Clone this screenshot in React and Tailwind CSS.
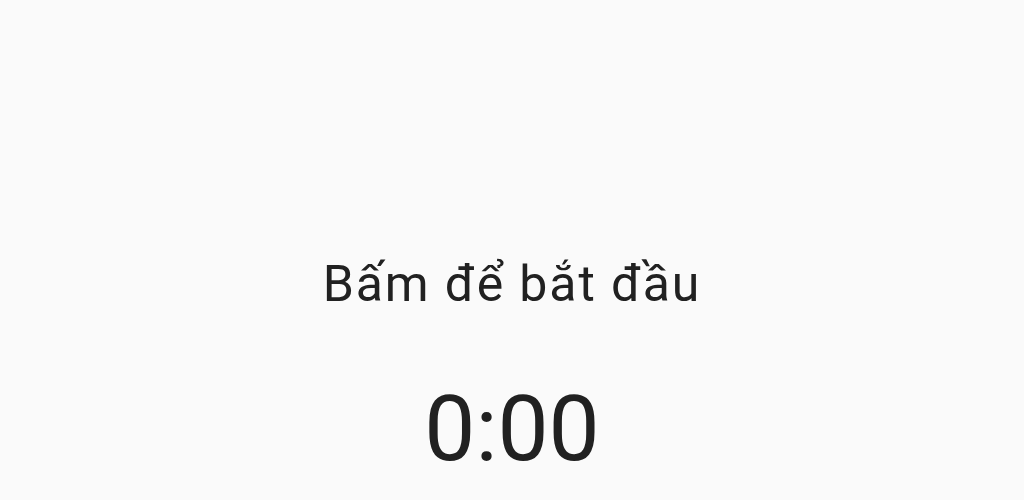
export default function App() {
  return (
    <div
      className="w-full h-[500px] bg-[#fafafa] text-[#212121] flex flex-col items-center overflow-hidden"
      style={{ fontFamily: "Roboto, 'Noto Sans', sans-serif" }}
    >
      <div className="pt-[255px] text-[50px] leading-[59px] tracking-[1.9px]">Bấm để bắt đầu</div>
      <div className="mt-[62px] text-[91px] leading-[107px]">0:00</div>
    </div>
  );
}
